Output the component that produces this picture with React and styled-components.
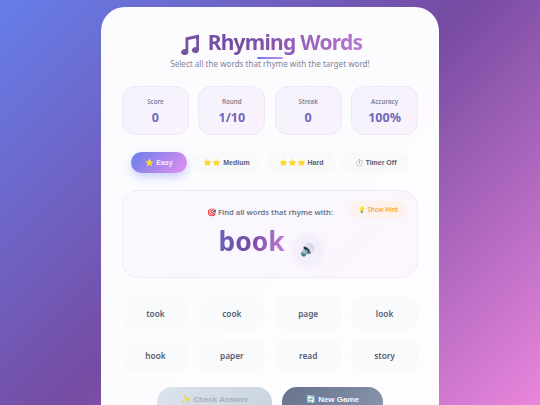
import React from "react";
import styled, { createGlobalStyle } from "styled-components";

const GlobalStyle = createGlobalStyle`
  html, body {
    margin: 0;
    padding: 0;
    height: 405px;
    overflow: hidden;
  }
  body {
    font-family: "Noto Sans", sans-serif;
  }
  * {
    box-sizing: border-box;
  }
`;

const Page = styled.div`
  width: 540px;
  height: 405px;
  overflow: hidden;
  padding-top: 7px;
  display: flex;
  justify-content: center;
  background: linear-gradient(135deg, #667eea 0%, #764ba2 50%, #ea85dc 100%);
`;

const Card = styled.div`
  width: 338px;
  height: 440px;
  flex-shrink: 0;
  padding: 21px;
  border-radius: 24px;
  background: rgba(255, 255, 255, 0.98);
`;

const Header = styled.div`
  text-align: center;
  margin-bottom: 16px;
`;

const Title = styled.h1`
  position: relative;
  margin: 0 0 1px;
  font-size: 21px;
  line-height: 28px;
  font-weight: 700;
  letter-spacing: -0.75px;
  background: linear-gradient(100deg, #6a5aad 0%, #764ba2 40%, #d98be8 100%);
  -webkit-background-clip: text;
  background-clip: text;
  color: transparent;
  &::after {
    content: "";
    position: absolute;
    left: 135px;
    bottom: -3px;
    width: 26px;
    height: 2px;
    border-radius: 2px;
    background: linear-gradient(90deg, #667eea, #c58be6);
  }
`;

const Note = styled.svg`
  width: 18px;
  height: 21px;
  vertical-align: -5px;
  margin-left: 3px;
  margin-right: 9px;
`;

const Subtitle = styled.p`
  margin: 0;
  font-size: 8.1px;
  line-height: 13px;
  color: #7d869c;
`;

const StatGrid = styled.div`
  display: grid;
  grid-template-columns: repeat(4, 1fr);
  gap: 9.5px;
  margin-bottom: 17px;
`;

const Stat = styled.div`
  height: 49px;
  padding-top: 10px;
  text-align: center;
  border-radius: 13px;
  border: 1px solid #ece8f7;
  background: linear-gradient(135deg, #f3f3fd 0%, #fbf2fc 100%);
`;

const StatLabel = styled.div`
  font-size: 6.2px;
  line-height: 9px;
  font-weight: 600;
  color: #79819a;
  margin-bottom: 3px;
`;

const StatValue = styled.div`
  font-size: 12.5px;
  line-height: 18px;
  font-weight: 700;
  color: #6f67b8;
`;

const Modes = styled.div`
  display: flex;
  justify-content: center;
  gap: 6px;
  margin-bottom: 17px;
`;

const Mode = styled.div`
  width: ${({ $w }) => $w}px;
  height: 21px;
  display: flex;
  align-items: center;
  justify-content: center;
  gap: 2px;
  border-radius: 11px;
  font-family: "Liberation Sans", sans-serif;
  font-size: 7px;
  font-weight: 700;
  color: ${({ $active }) => ($active ? "#f4e9fb" : "#566076")};
  background: ${({ $active }) =>
    $active ? "linear-gradient(135deg, #667eea, #e58ff0)" : "#f8f9fb"};
  box-shadow: ${({ $active }) =>
    $active ? "0 4px 10px rgba(102, 126, 234, 0.35)" : "none"};
`;

const Target = styled.div`
  position: relative;
  height: 88px;
  margin-bottom: 18px;
  padding-top: 15px;
  border-radius: 16px;
  border: 1px solid #efecf8;
  background: linear-gradient(135deg, #f8f9fe 0%, #fcf5fd 100%);
  text-align: center;
`;

const Prompt = styled.div`
  font-size: 7.6px;
  line-height: 12px;
  font-weight: 600;
  color: #6d7488;
`;

const HintButton = styled.div`
  position: absolute;
  top: 10px;
  right: 10px;
  width: 58px;
  height: 17px;
  display: flex;
  align-items: center;
  justify-content: center;
  border-radius: 9px;
  background: #fdf3ec;
  font-size: 6.2px;
  font-weight: 600;
  color: #f2ab3c;
`;

const WordRow = styled.div`
  display: flex;
  justify-content: center;
  align-items: flex-start;
  gap: 9px;
  margin-top: 5px;
`;

const BigWord = styled.div`
  font-size: 26.4px;
  line-height: 36px;
  font-weight: 700;
  background: linear-gradient(100deg, #6762ba 0%, #764ba2 50%, #c583dc 100%);
  -webkit-background-clip: text;
  background-clip: text;
  color: transparent;
`;

const Speaker = styled.div`
  width: 28px;
  height: 28px;
  margin-top: 12px;
  display: flex;
  align-items: center;
  justify-content: center;
  border-radius: 50%;
  font-size: 12px;
  background: #f3eefb;
  box-shadow: 0 2px 8px rgba(150, 120, 220, 0.12);
`;

const WordGrid = styled.div`
  display: grid;
  grid-template-columns: repeat(4, 1fr);
  gap: 8px 9.5px;
  margin-bottom: 15px;
`;

const WordCard = styled.div`
  height: 34px;
  display: flex;
  align-items: center;
  justify-content: center;
  border-radius: 12px;
  background: #f9fafc;
  font-size: 8.3px;
  font-weight: 600;
  color: #566076;
`;

const Actions = styled.div`
  display: flex;
  justify-content: center;
  gap: 10px;
`;

const ActionButton = styled.div`
  width: ${({ $w }) => $w}px;
  height: 34px;
  padding-top: 8px;
  display: flex;
  align-items: flex-start;
  justify-content: center;
  border-radius: 15px;
  font-family: "Liberation Sans", sans-serif;
  font-size: 8px;
  font-weight: 700;
  color: ${({ $muted }) => ($muted ? "#a6b0c2" : "#f5f7fb")};
  background: ${({ $muted }) =>
    $muted
      ? "linear-gradient(135deg, #dbe3ec, #c8d2de)"
      : "linear-gradient(135deg, #66718c, #8b98ae)"};
`;

const stats = [
  ["Score", "0"],
  ["Round", "1/10"],
  ["Streak", "0"],
  ["Accuracy", "100%"],
];

const modes = [
  ["⭐ Easy", 56, true],
  ["⭐⭐ Medium", 67, false],
  ["⭐⭐⭐ Hard", 70, false],
  ["⏱️ Timer Off", 67, false],
];

const words = ["took", "cook", "page", "look", "hook", "paper", "read", "story"];

const App = () => {
  return (
    <Page>
      <GlobalStyle />
      <Card>
        <Header>
          <Title>
            <Note viewBox="0 0 18 21" fill="#74549f">
              <path d="M4.5 3.5 L18 0.5 V16 A3.6 3 0 1 1 15.2 13.2 V4.2 L7.3 6 V18 A3.6 3 0 1 1 4.5 15.2 Z" />
            </Note>
            Rhyming Words
          </Title>
          <Subtitle>Select all the words that rhyme with the target word!</Subtitle>
        </Header>
        <StatGrid>
          {stats.map(([label, value]) => (
            <Stat key={label}>
              <StatLabel>{label}</StatLabel>
              <StatValue>{value}</StatValue>
            </Stat>
          ))}
        </StatGrid>
        <Modes>
          {modes.map(([label, w, active]) => (
            <Mode key={label} $w={w} $active={active}>
              {label}
            </Mode>
          ))}
        </Modes>
        <Target>
          <Prompt>🎯 Find all words that rhyme with:</Prompt>
          <HintButton>💡 Show Hint</HintButton>
          <WordRow>
            <BigWord>book</BigWord>
            <Speaker>🔊</Speaker>
          </WordRow>
        </Target>
        <WordGrid>
          {words.map((word) => (
            <WordCard key={word}>{word}</WordCard>
          ))}
        </WordGrid>
        <Actions>
          <ActionButton $w={115} $muted>
            ✨ Check Answer
          </ActionButton>
          <ActionButton $w={101}>🔄 New Game</ActionButton>
        </Actions>
      </Card>
    </Page>
  );
};

export default App;
